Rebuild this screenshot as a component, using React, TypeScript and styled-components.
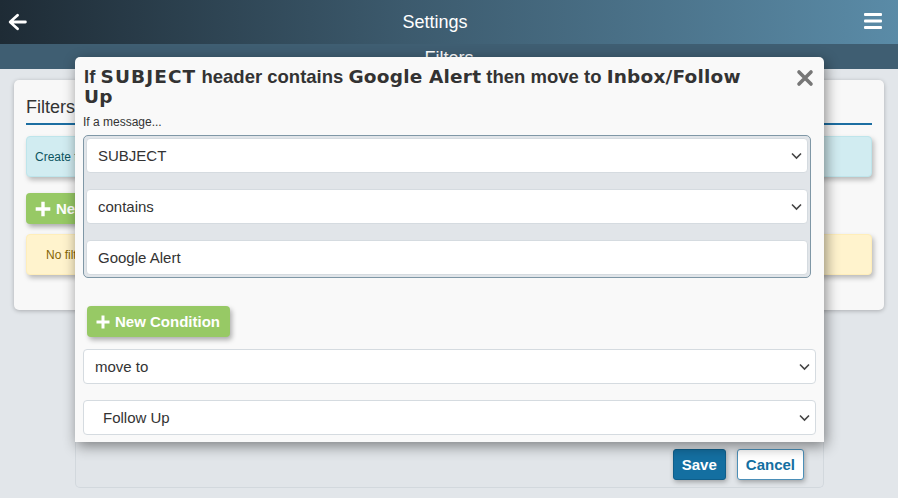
import React from 'react';
import styled, { createGlobalStyle } from 'styled-components';

const GlobalStyle = createGlobalStyle`
  html, body {
    margin: 0;
    padding: 0;
    background: #e2e6ea;
    font-family: "Liberation Sans", Arial, sans-serif;
    color: #333;
  }
  * { box-sizing: border-box; }
`;

const Page = styled.div`
  position: relative;
  width: 898px;
  height: 498px;
  overflow: hidden;
  background: #e2e6ea;
`;

const TopBar = styled.header`
  display: flex;
  align-items: center;
  justify-content: space-between;
  height: 44px;
  padding: 0 16px 0 8px;
  background: linear-gradient(90deg, #1e2b35 0%, #3c5a6d 45%, #5a8ba7 100%);
  color: #fff;
`;

const TopTitle = styled.h1`
  margin: 0;
  font-size: 18px;
  font-weight: normal;
`;

const IconButton = styled.span<{ $slot?: number }>`
  display: flex;
  justify-content: flex-end;
  width: ${(p) => p.$slot ?? 20}px;
  height: 20px;
  color: #fff;
`;

const SubBar = styled.div`
  height: 25px;
  background: #3f5e72;
  color: #fff;
  text-align: center;
  font-size: 18px;
  line-height: 25px;
  padding-top: 2px;
`;

const Content = styled.main`
  padding: 11px 14px;
`;

const Card = styled.section`
  height: 230px;
  padding: 17px 12px 12px;
  background: #f8f8f8;
  border-radius: 5px;
  box-shadow: 0 1px 4px rgba(0, 0, 0, 0.25);
`;

const CardHeading = styled.h2`
  margin: 0 0 11px;
  padding-bottom: 5px;
  font-size: 18px;
  font-weight: normal;
  border-bottom: 2px solid #1c6ea2;
`;

const Notice = styled.div<{ $tone: 'info' | 'warn' }>`
  display: flex;
  align-items: center;
  height: 41px;
  padding: 0 ${(p) => (p.$tone === 'info' ? 8 : 19)}px;
  margin-bottom: ${(p) => (p.$tone === 'info' ? 16 : 0)}px;
  border-radius: 4px;
  font-size: 12px;
  background: ${(p) => (p.$tone === 'info' ? '#d1ecf1' : '#fff3cd')};
  border: 1px solid ${(p) => (p.$tone === 'info' ? '#bee5eb' : '#ffeeba')};
  color: ${(p) => (p.$tone === 'info' ? '#0c5460' : '#856404')};
  box-shadow: 2px 3px 5px rgba(0, 0, 0, 0.25);
`;

const GreenButton = styled.button`
  display: inline-flex;
  align-items: center;
  gap: 4px;
  height: 31px;
  padding: 0 10px 0 8px;
  border: none;
  border-radius: 4px;
  background: #97c965;
  color: #fff;
  font-family: "Liberation Sans", Arial, sans-serif;
  font-size: 15px;
  font-weight: bold;
  box-shadow: 2px 3px 5px rgba(0, 0, 0, 0.3);
`;

const CardButtonRow = styled.div`
  margin-bottom: 10px;
`;

const Modal = styled.div`
  position: absolute;
  left: 75px;
  top: 57px;
  width: 749px;
`;

const ModalBody = styled.div`
  position: relative;
  padding: 10px 8px 7px 8px;
  background: #f9f9f9;
  border-radius: 5px 5px 0 0;
  box-shadow: 2px 4px 14px rgba(0, 0, 0, 0.45);
`;

const ModalTitle = styled.h3`
  margin: 0 56px 8px 1px;
  font-size: 18.5px;
  line-height: 20px;
  font-weight: bold;
  color: #333;
`;

const Strong = styled.strong<{ $wide?: boolean }>`
  font-family: "DejaVu Sans", Verdana, sans-serif;
  font-weight: bold;
  letter-spacing: ${(p) => (p.$wide ? 1.1 : 0.2)}px;
`;

const CloseButton = styled.span`
  position: absolute;
  top: 12px;
  right: 10px;
  display: flex;
  width: 18px;
  height: 18px;
  color: #777;
`;

const Hint = styled.div`
  font-size: 12px;
  margin-bottom: 6px;
`;

const ConditionGroup = styled.div`
  display: flex;
  flex-direction: column;
  gap: 16px;
  width: 728px;
  padding: 2px;
  background: #e1e5e9;
  border: 1px solid #7f97a6;
  border-radius: 5px;
`;

const FieldWrap = styled.div`
  position: relative;
  width: 100%;
`;

const fieldCss = `
  display: block;
  width: 100%;
  height: 35px;
  border: 1px solid #d5dbe0;
  border-radius: 4px;
  background: #fff;
  font-family: "Liberation Sans", Arial, sans-serif;
  font-size: 15px;
  color: #333;
  outline: none;
`;

const Select = styled.select<{ $indent?: number }>`
  ${fieldCss}
  appearance: none;
  padding: 0 30px 0 ${(p) => p.$indent ?? 11}px;
`;

const TextInput = styled.input`
  ${fieldCss}
  padding: 0 11px;
`;

const Chevron = styled.svg`
  position: absolute;
  right: 6px;
  top: 14px;
  width: 11px;
  height: 8px;
  pointer-events: none;
`;

const ConditionButtonRow = styled.div`
  padding: 28px 0 12px 4px;
`;

const ActionStack = styled.div`
  display: flex;
  flex-direction: column;
  gap: 16px;
`;

const Footer = styled.div`
  display: flex;
  justify-content: flex-end;
  gap: 11px;
  height: 46px;
  padding: 7px 19px 0 0;
  background: #e1e5e9;
  border: 1px solid #d2d8dd;
  border-top: none;
  border-radius: 0 0 5px 5px;
`;

const FooterButton = styled.button<{ $primary?: boolean }>`
  height: 31px;
  padding: 0 8px;
  border-radius: 3px;
  font-family: "Liberation Sans", Arial, sans-serif;
  font-size: 15px;
  font-weight: bold;
  background: ${(p) => (p.$primary ? '#146fa1' : '#fff')};
  color: ${(p) => (p.$primary ? '#fff' : '#146fa1')};
  border: 1px solid ${(p) => (p.$primary ? '#0f5e8a' : '#4b8fb8')};
  box-shadow: 1px 2px 5px rgba(0, 0, 0, 0.3);
`;

const ArrowLeft = () => (
  <svg viewBox="0 0 20 20" width="20" height="20" fill="currentColor">
    <path d="M8.6 2.2 1.2 9.1a1.2 1.2 0 0 0 0 1.8l7.4 6.9a1.4 1.4 0 0 0 2-.1 1.4 1.4 0 0 0-.1-2L5.6 11.4h11.8a1.4 1.4 0 0 0 0-2.8H5.6l4.9-4.3a1.4 1.4 0 0 0 .1-2 1.4 1.4 0 0 0-2-.1Z" />
  </svg>
);

const Hamburger = () => (
  <svg viewBox="0 0 18 18" width="18" height="18" fill="currentColor">
    <rect x="0" y="1" width="18" height="3" rx="1" />
    <rect x="0" y="7.5" width="18" height="3" rx="1" />
    <rect x="0" y="14" width="18" height="3" rx="1" />
  </svg>
);

const Times = () => (
  <svg viewBox="0 0 18 18" width="18" height="18">
    <path d="M3 3 15 15M15 3 3 15" stroke="currentColor" strokeWidth="3.6" strokeLinecap="round" />
  </svg>
);

const Plus = ({ size = 16 }: { size?: number }) => (
  <svg viewBox="0 0 16 16" width={size} height={size}>
    <path d="M8 1.5v13M1.5 8h13" stroke="#fff" strokeWidth="3" />
  </svg>
);

const ChevronDown = () => (
  <Chevron viewBox="0 0 11 8">
    <path d="M1 1.5 5.5 6 10 1.5" fill="none" stroke="#444" strokeWidth="1.6" />
  </Chevron>
);

const SelectField: React.FC<{ value: string; indent?: number }> = ({ value, indent }) => (
  <FieldWrap>
    <Select $indent={indent} defaultValue={value}>
      <option value={value}>{value}</option>
    </Select>
    <ChevronDown />
  </FieldWrap>
);

export default function App() {
  return (
    <>
      <GlobalStyle />
      <Page>
        <TopBar>
          <IconButton>
            <ArrowLeft />
          </IconButton>
          <TopTitle>Settings</TopTitle>
          <IconButton $slot={40}>
            <Hamburger />
          </IconButton>
        </TopBar>
        <SubBar>Filters</SubBar>
        <Content>
          <Card>
            <CardHeading>Filters</CardHeading>
            <Notice $tone="info">Create filters to sort incoming messages automatically.</Notice>
            <CardButtonRow>
              <GreenButton>
                <Plus size={18} /> New Filter
              </GreenButton>
            </CardButtonRow>
            <Notice $tone="warn">No filters have been defined yet.</Notice>
          </Card>
        </Content>

        <Modal>
          <ModalBody>
            <ModalTitle>
              If <Strong $wide>SUBJECT</Strong> header contains <Strong>Google Alert</Strong> then move to{' '}
              <Strong>Inbox/Follow Up</Strong>
            </ModalTitle>
            <CloseButton>
              <Times />
            </CloseButton>
            <Hint>If a message...</Hint>
            <ConditionGroup>
              <SelectField value="SUBJECT" />
              <SelectField value="contains" />
              <FieldWrap>
                <TextInput defaultValue="Google Alert" />
              </FieldWrap>
            </ConditionGroup>
            <ConditionButtonRow>
              <GreenButton>
                <Plus /> New Condition
              </GreenButton>
            </ConditionButtonRow>
            <ActionStack>
              <SelectField value="move to" />
              <SelectField value="Follow Up" indent={19} />
            </ActionStack>
          </ModalBody>
          <Footer>
            <FooterButton $primary>Save</FooterButton>
            <FooterButton>Cancel</FooterButton>
          </Footer>
        </Modal>
      </Page>
    </>
  );
}
